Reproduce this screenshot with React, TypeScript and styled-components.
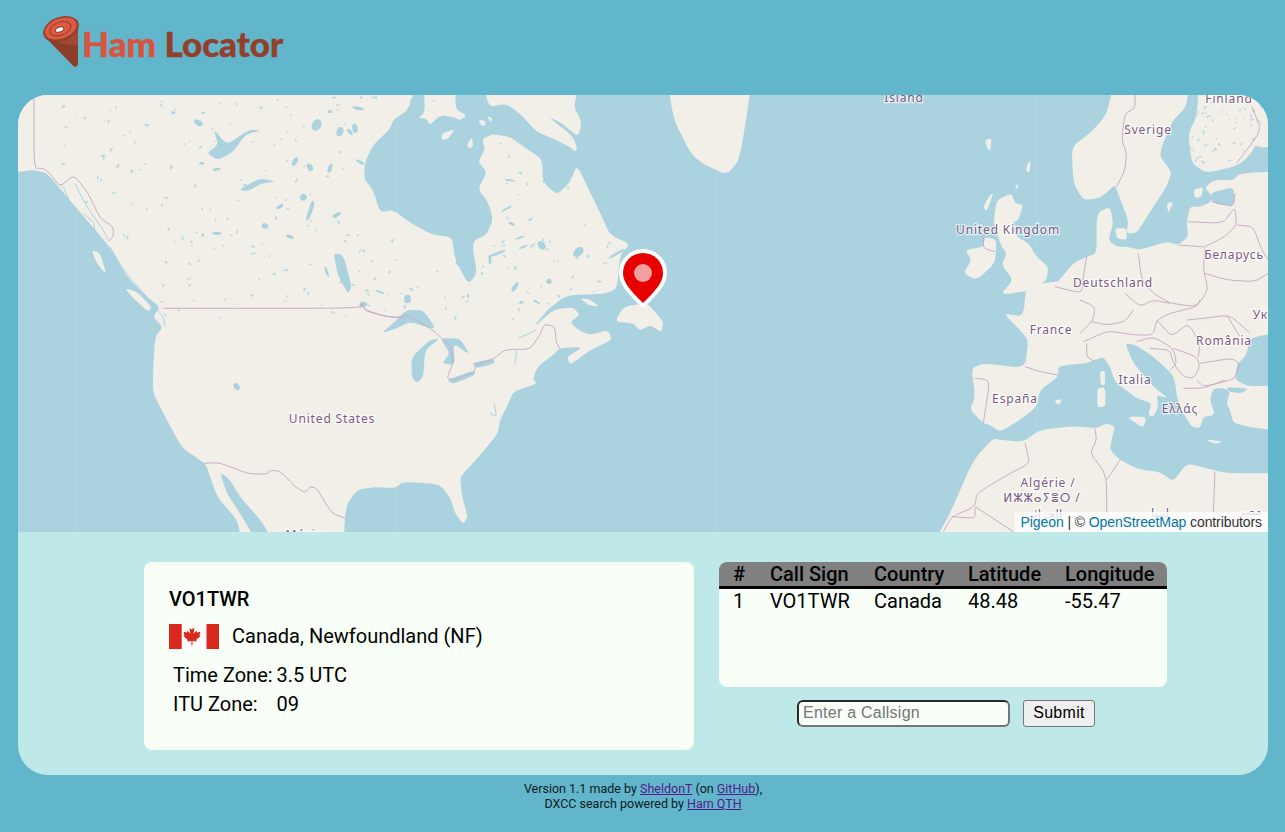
import * as React from 'react'
import styled, { createGlobalStyle } from 'styled-components'

const GlobalStyle = createGlobalStyle`
  html, body {
    margin: 0;
    height: 100%;
    background: #62b6cb;
    font-family: Roboto, "Liberation Sans", sans-serif;
    overflow: hidden;
  }
`

const Page = styled.div`
  display: flex;
  flex-direction: column;
  height: 832px;
  padding: 0 17px 0 18px;
  box-sizing: border-box;
`

const Header = styled.header`
  display: flex;
  align-items: center;
  height: 95px;
  padding: 0 0 11px 22px;
  box-sizing: border-box;
  gap: 2px;
`

const LogoText = styled.div`
  font: 900 35px/40px Lato, "Noto Sans", sans-serif;
  -webkit-text-stroke: 0.4px currentColor;
  color: #923f2c;
  padding-top: 1px;
  span {
    color: #d9543f;
  }
`

const Main = styled.main`
  border-radius: 30px;
  overflow: hidden;
  background: #bee9e8;
  display: flex;
  flex-direction: column;
  height: 680px;
`

const MapFrame = styled.div`
  position: relative;
  height: 437px;
  flex: none;
  background: #aad3df;
  overflow: hidden;
`

const MapSvg = styled.svg`
  display: block;
  width: 100%;
  height: 100%;
`

const MapLabel = styled.text`
  font: 12px "Noto Sans", "DejaVu Sans", sans-serif;
  letter-spacing: 0.85px;
  fill: #7a5a82;
  stroke: rgba(255, 255, 255, 0.7);
  stroke-width: 2.5px;
  paint-order: stroke;
  text-anchor: middle;
`

const Pin = styled.svg`
  position: absolute;
  left: 600px;
  top: 153px;
  width: 50px;
  height: 62px;
`

const Attribution = styled.div`
  position: absolute;
  right: 0;
  bottom: 0;
  height: 20px;
  padding: 0 6px;
  background: rgba(255, 255, 255, 0.8);
  color: #333;
  font: 14px/20px "Liberation Sans", Arial, sans-serif;
  letter-spacing: -0.1px;
  a {
    color: #0078a8;
    text-decoration: none;
  }
`

const Details = styled.section`
  display: flex;
  align-items: flex-start;
  gap: 25px;
  padding: 30px 0 0 126px;
`

const Card = styled.div`
  background: #f7fff7;
  border-radius: 8px;
`

const InfoCard = styled(Card)`
  width: 550px;
  height: 188px;
  padding: 25px 25px 0;
  box-sizing: border-box;
`

const CallSign = styled.div`
  font-size: 20px;
  font-weight: 500;
  line-height: 24px;
  color: #000;
`

const CountryRow = styled.div`
  display: flex;
  align-items: center;
  gap: 13px;
  margin-top: 13px;
  font-size: 20px;
  line-height: 25px;
`

const Flag = styled.svg`
  width: 50px;
  height: 25px;
  flex: none;
`

const ZoneTable = styled.table`
  margin: 11px 0 0 1px;
  border-collapse: separate;
  border-spacing: 2px;
  font-size: 20px;
  td {
    padding: 1px;
    line-height: 25px;
  }
`

const RightColumn = styled.div`
  display: flex;
  flex-direction: column;
  gap: 13px;
  width: 448px;
`

const ResultsCard = styled(Card)`
  height: 125px;
  overflow: hidden;
`

const ResultsTable = styled.table`
  width: 100%;
  table-layout: fixed;
  border-collapse: collapse;
  font-size: 20px;
  th {
    background: #808080;
    border-bottom: 3px solid #000;
    font-weight: 500;
    text-align: left;
    padding: 0 0 0 14px;
    line-height: 24px;
    white-space: nowrap;
  }
  td {
    padding: 0 0 0 14px;
    line-height: 24px;
  }
  th:nth-child(1) { width: 23px; }
  th:nth-child(2) { width: 90px; }
  th:nth-child(3) { width: 80px; }
  th:nth-child(4) { width: 83px; }
`

const SearchForm = styled.form`
  display: flex;
  justify-content: center;
  gap: 13px;
  padding-left: 6px;
`

const CallInput = styled.input`
  width: 213px;
  height: 27px;
  box-sizing: border-box;
  padding: 0 4px 2px;
  border-width: 2px;
  border-style: solid;
  border-color: #2a2a2a #767676 #767676 #2a2a2a;
  border-radius: 6px;
  background: #f7fff7;
  font: 16px "Liberation Sans", Arial, sans-serif;
  letter-spacing: 0.25px;
  &::placeholder {
    color: #757575;
  }
`

const SubmitButton = styled.button`
  width: 72px;
  height: 27px;
  padding: 0 0 2px;
  border: 1px solid #767676;
  border-radius: 3px;
  background: #efefef;
  color: #000;
  font: 16px "Liberation Sans", Arial, sans-serif;
  letter-spacing: 0.3px;
`

const Footer = styled.footer`
  padding-top: 6px;
  text-align: center;
  font-size: 12.5px;
  line-height: 15px;
  color: #0c1a20;
  a {
    color: #551a8b;
  }
`

const LAND = '#f2efe9'
const WATER = '#aad3df'

const V_WEST = 'translate(0 90) scale(.3333)'
const V_NORTH = 'translate(340 92) scale(.3333)'
const V_EAST = 'translate(340 300) scale(.3333)'
const V_NF = 'translate(500 200) scale(.3333)'
const V_EU_N = 'translate(940 90) scale(.3333)'
const V_EU_S = 'translate(940 300) scale(.3333)'

// rounds the corners of a point list, keeping the shape close to the points
function smooth (list: string, closed = true) {
  const pts = list.trim().split(/\s+/).map(p => p.split(',').map(Number))
  const n = pts.length
  const toward = (a: number[], b: number[], t: number) => `${a[0] + (b[0] - a[0]) * t} ${a[1] + (b[1] - a[1]) * t}`
  let d = ''
  if (closed) {
    pts.forEach((p, i) => {
      const prev = pts[(i + n - 1) % n]
      const next = pts[(i + 1) % n]
      d += `${i ? 'L' : 'M'}${toward(p, prev, 0.3)}Q${p[0]} ${p[1]} ${toward(p, next, 0.3)}`
    })
    return d + 'Z'
  }
  d = `M${pts[0][0]} ${pts[0][1]}`
  for (let i = 1; i < n - 1; i++) {
    d += `L${toward(pts[i], pts[i - 1], 0.3)}Q${pts[i][0]} ${pts[i][1]} ${toward(pts[i], pts[i + 1], 0.3)}`
  }
  return d + `L${pts[n - 1][0]} ${pts[n - 1][1]}`
}

const northAmerica =
  '-200,-200 416,-200 416,85 408,110 393,120 390,129 373,145 365,162 364,179 373,190 380,212 393,210 412,224 433,235 452,237 455,259 468,284 477,274 472,242 487,234 493,219 488,202 478,189 487,172 478,162 485,149 482,139 493,134 510,137 527,149 542,159 543,182 557,195 570,182 577,165 590,192 602,217 610,235 630,244 620,255 617,289 603,294 567,295 547,310 533,328 553,310 573,307 580,315 570,322 578,330 590,335 608,330 612,340 590,350 570,365 567,357 583,347 560,348 553,355 537,367 533,380 538,383 513,392 510,400 500,420 498,433 487,447 473,463 460,477 462,497 468,517 463,524 455,513 450,497 440,485 427,483 403,482 395,488 373,487 357,490 345,507 342,600 245,600 240,523 217,497 207,467 203,462 182,448 167,420 153,393 153,373 155,337 163,327 153,317 160,307 147,297 127,277 110,247 67,197 47,173 33,170 18,172 -200,172'

const landShapes: { view: string; points: string[] }[] = [
  {
    view: V_WEST,
    points: [
      '275,480 300,490 320,555 290,520',
      '375,595 410,605 455,650 445,665 400,625'
    ]
  },
  {
    view: V_NORTH,
    points: [
      '250,-60 350,-60 345,50 380,70 360,85 340,75 300,70 270,100 260,80 235,78 255,60',
      '305,125 345,110 325,140 305,145',
      '380,160 395,135 400,160 390,170',
      '415,85 435,85 438,100 425,102',
      '440,72 458,80 452,90',
      '425,-60 445,45 500,35 545,70 590,120 640,140 690,165 705,180 712,165 695,130 625,75 660,90 715,135 725,90 700,40 735,-60',
      '980,-60 1000,80 1050,180 1080,210 1160,250 1200,200 1240,-60'
    ]
  },
  {
    view: V_NF,
    points: [
      '370,320 345,365 400,370 420,392 450,375 485,398 490,365 460,330 440,310',
      '240,295 270,298 297,320 265,315'
    ]
  },
  {
    view: V_EU_N,
    points: [
      '530,-60 750,-60 740,50 700,90 690,110 665,170 660,200 695,245 680,290 640,350 590,430 560,430 565,390 530,300 525,285 480,325 430,330 400,280 395,170 450,130 500,75',
      '780,-60 1100,-60 1100,170 950,170 900,225 800,250 755,220 745,130 770,80',
      '795,295 820,270 880,270 900,250 1100,240 1100,760 260,760 255,635 300,610 350,580 400,520 440,500 470,490 470,370 510,350 520,400 505,450 530,470 560,470 600,480 680,455 715,465 745,440 740,400 750,350 780,350 815,335 810,310',
      '215,310 225,340 250,345 235,390 215,400 230,440 265,460 290,500 325,530 320,570 280,600 180,615 220,570 185,525 200,490 185,470 160,400 170,330',
      '135,440 170,450 165,520 110,570 70,550 95,510 75,480 130,470',
      '135,150 155,145 150,185 140,170',
      '265,215 272,215 268,250 258,240',
      '225,285 235,285 230,300',
      '150,315 160,310 140,365 130,350',
      '525,415 560,415 560,450 530,445',
      '680,340 700,335 685,370',
      '760,300 790,290 785,320 765,325'
    ]
  },
  {
    view: V_EU_S,
    points: [
      '260,-60 1100,-60 1100,400 950,385 880,370 870,330 860,310 870,275 850,265 820,265 810,300 825,345 790,350 780,385 755,380 730,340 710,290 705,240 690,215 640,170 610,150 585,135 555,130 580,190 640,260 685,295 650,285 655,320 640,350 625,345 635,310 590,295 525,245 510,200 490,170 440,190 380,195 355,200 355,230 300,270 290,320 240,360 180,395 150,375 130,370 90,330 105,290 95,205 130,190 255,205 265,120 240,90 190,40 250,50',
      '-60,780 0,695 30,640 100,480 160,415 180,420 250,425 300,390 400,378 470,385 500,370 525,380 515,420 510,450 540,480 600,510 660,515 700,545 740,490 800,505 860,520 1100,520 1100,780',
      '480,215 495,212 495,255 482,255',
      '472,265 495,262 497,320 472,322',
      '560,350 620,350 610,385',
      '345,300 365,298 360,313 348,312',
      '795,418 850,425 825,432'
    ]
  }
]

const waterShapes: { view: string; points: string }[] = [
  { view: V_WEST, points: '660,1145 690,1170 720,1220 790,1300 830,1380 785,1380 720,1270 680,1210' },
  { view: V_WEST, points: '1000,490 1030,495 1055,590 1045,612 1015,560' },
  { view: V_WEST, points: '620,190 655,165 640,115 680,165 745,120 785,120 735,135 700,185 655,210' },
  { view: V_WEST, points: '715,300 780,265 830,275 785,280 745,303' },
  { view: V_WEST, points: '915,395 935,330 945,340 930,385' },
  { view: V_EAST, points: '125,100 170,60 200,30 250,30 290,90 210,65 170,85' },
  { view: V_EAST, points: '215,170 270,120 300,115 255,150 250,230 230,250 215,230' },
  { view: V_EAST, points: '300,115 360,115 390,165 340,130 345,195 305,190 330,160' },
  { view: V_EAST, points: '320,240 405,210 405,225 340,252' },
  { view: V_EAST, points: '395,190 460,175 465,190 410,205' },
  { view: V_EU_S, points: '930,110 1100,90 1100,250 930,260 885,240 890,195 920,165' },
  { view: V_EU_S, points: '860,262 925,265 905,280 865,275' },
  { view: V_EU_N, points: '880,290 885,345 840,345 815,335 810,310' },
  { view: V_EU_N, points: '945,165 985,180 985,240 960,250 930,200' }
]

const borders: { view: string; points: string }[] = [
  { view: V_WEST, points: '102,15 102,235 130,235 150,250 180,290 222,255 265,310 300,385 340,410 340,440 325,455' },
  { view: V_WEST, points: '490,655 1080,655 1085,635 1095,660 1160,680 1210,685' },
  { view: V_WEST, points: '612,1120 660,1118 745,1152 805,1152 805,1142 840,1142 885,1190 915,1208 930,1190 950,1195 995,1270 1035,1285' },
  { view: V_EAST, points: '60,25 65,12 75,32 130,48 170,52 205,45 285,95 300,110 330,135 340,190 320,235 345,240 405,215 405,195 460,178 495,148 570,148 600,105 613,72 645,80 648,125 660,147' },
  { view: V_EU_N, points: '585,15 585,55 555,70 545,150 560,190 555,240 530,290' },
  { view: V_EU_N, points: '935,50 965,120 890,220' },
  { view: V_EU_N, points: '130,440 130,475 165,485' },
  { view: V_EU_N, points: '595,490 605,570 640,610 690,640 770,650 805,600 790,540 795,470 780,470 715,465' },
  { view: V_EU_N, points: '440,500 430,560 425,610 345,590' },
  { view: V_EU_N, points: '815,335 880,350 885,310' },
  { view: V_EU_N, points: '745,395 850,400 885,350 890,405 855,440 795,470' },
  { view: V_EU_N, points: '890,405 940,410 965,480 985,510' },
  { view: V_EU_N, points: '795,550 860,570 945,575 985,550' },
  { view: V_EU_N, points: '555,610 600,650 640,630 690,640' },
  { view: V_EU_S, points: '420,100 460,60 465,20 420,0' },
  { view: V_EU_S, points: '455,65 500,75 555,65 580,30' },
  { view: V_EU_S, points: '430,125 500,95 520,95 585,105 640,105 650,60 690,40 770,20 780,0' },
  { view: V_EU_S, points: '440,130 440,170 465,185' },
  { view: V_EU_S, points: '255,200 300,215 355,225' },
  { view: V_EU_S, points: '105,235 150,240 130,370' },
  { view: V_EU_S, points: '740,60 790,55 870,45 930,100' },
  { view: V_EU_S, points: '650,60 695,110 745,70 780,130 775,170' },
  { view: V_EU_S, points: '590,125 640,110 700,145 710,190 690,210' },
  { view: V_EU_S, points: '630,145 690,150 700,190 730,230 760,235 780,200 770,170 700,145' },
  { view: V_EU_S, points: '780,190 875,175 900,190 885,235 855,245 790,260 770,240' },
  { view: V_EU_S, points: '730,265 790,265 855,240' },
  { view: V_EU_S, points: '860,45 900,110' },
  { view: V_EU_S, points: '255,430 270,490 210,520 110,580 105,620 35,650 10,695' },
  { view: V_EU_S, points: '105,620 220,695' },
  { view: V_EU_S, points: '35,650 105,655 105,625' },
  { view: V_EU_S, points: '465,385 470,420 450,460 490,510 500,550 500,640' },
  { view: V_EU_S, points: '540,480 500,540' },
  { view: V_EU_S, points: '825,515 820,640' }
]

const fjords: { view: string; points: string }[] = [
  { view: V_WEST, points: '190,290 225,370 250,420 290,455' },
  { view: V_WEST, points: '225,280 260,350 310,420 325,450' },
  { view: V_WEST, points: '250,370 285,400 280,445' },
  { view: V_WEST, points: '330,470 370,540 440,620 490,680 495,710' },
  { view: V_EAST, points: '525,190 530,150' },
  { view: V_EAST, points: '462,310 470,350 450,340' },
  { view: V_EAST, points: '535,115 590,90' }
]

// larger lakes: x, y, rx, ry, rotation
const lakes: number[][] = [
  [595, 98, 14, 8, 30], [520, 68, 6, 4, 0], [610, 68, 5, 3, 0], [950, 105, 14, 18, 30], [1020, 125, 10, 14, 20],
  [1065, 115, 8, 14, -10], [990, 65, 8, 4, 0], [1075, 55, 18, 5, 10], [605, 220, 8, 4, 0], [650, 238, 12, 4, -10],
  [885, 215, 7, 14, 30], [930, 232, 8, 12, -30], [990, 235, 6, 14, 20], [910, 322, 10, 10, 0], [840, 350, 12, 5, -30],
  [795, 408, 10, 8, 20], [650, 430, 14, 5, 0], [870, 440, 12, 5, 20], [1010, 375, 14, 6, -30], [980, 545, 16, 4, 70],
  [1222, 627, 10, 13, 0], [1090, 643, 12, 8, 0], [710, 890, 8, 12, -30]
]

const northLakes: number[][] = [
  [60, 210, 14, 4, 30], [30, 120, 12, 5, 50], [510, 265, 16, 3, 10], [515, 395, 10, 4, 20], [540, 437, 14, 3, -20],
  [470, 485, 30, 4, -20], [550, 465, 14, 3, -20], [605, 460, 14, 10, 50], [715, 480, 18, 12, -40], [830, 485, 28, 4, -30],
  [525, 585, 6, 16, 35], [627, 568, 8, 8, 0], [450, 505, 4, 14, 0], [360, 515, 14, 8, 30], [204, 620, 8, 12, 0],
  [395, 390, 16, 14, 0], [500, 350, 18, 3, -30], [640, 225, 5, 8, 20], [120, 600, 14, 3, 20], [590, 630, 12, 3, 30]
]

// fine lake and river specks, from a fixed sequence so the picture is stable
function makeSpecks () {
  let seed = 7
  const next = () => {
    seed = (seed * 16807) % 2147483647
    return seed / 2147483647
  }
  const specks: number[][] = []
  while (specks.length < 230) {
    const x = 60 + next() * 560
    const y = 97 + next() * 225
    const hudson = ((x - 430) / 72) ** 2 + ((y - 175) / 65) ** 2 < 1
    const james = x > 450 && x < 482 && y > 230 && y < 290
    const ocean = x > 612 || (x > 590 && y < 230) || (x > 570 && y < 195) || (x > 480 && y < 140)
    const coast = x < 120 && y > 230
    if (!hudson && !james && !ocean && !coast) {
      specks.push([x, y, 0.7 + next() * 1.8, 0.5 + next() * 0.7, next() * 180])
    }
  }
  while (specks.length < 290) {
    specks.push([1190 + next() * 75, 100 + next() * 65, 0.6 + next() * 1.4, 0.5 + next() * 0.5, next() * 180])
  }
  return specks
}

const specks = makeSpecks()

const tileSeams = [77, 397, 717, 1037]

const labels: { x: number; y: number; text: string }[] = [
  { x: 904, y: 102, text: 'Ísland' },
  { x: 1229, y: 103, text: 'Finland' },
  { x: 1148, y: 134, text: 'Sverige' },
  { x: 1008, y: 234, text: 'United Kingdom' },
  { x: 1113, y: 287, text: 'Deutschland' },
  { x: 1234, y: 259, text: 'Беларусь' },
  { x: 1051, y: 334, text: 'France' },
  { x: 1224, y: 345, text: 'România' },
  { x: 1135, y: 384, text: 'Italia' },
  { x: 1015, y: 403, text: 'España' },
  { x: 1180, y: 413, text: 'Ελλάς' },
  { x: 1048, y: 487, text: 'Algérie /' },
  { x: 1042, y: 502, text: 'ⵍⵣⵣⴰⵢⴻⵔ /' },
  { x: 1045, y: 518, text: 'الجزائر' },
  { x: 332, y: 423, text: 'United States' },
  { x: 308, y: 539, text: 'México' },
  { x: 1278, y: 319, text: 'Україна' },
  { x: 1160, y: 517, text: 'ليبيا' },
  { x: 1250, y: 515, text: 'مصر' }
]

function MapBackdrop () {
  return (
    <MapSvg viewBox="18 95 1250 437" preserveAspectRatio="none">
      <defs>
        <filter id="soft" x="0" y="0" width="100%" height="100%">
          <feGaussianBlur stdDeviation="0.45" />
        </filter>
      </defs>
      <g filter="url(#soft)">
        <rect x="18" y="95" width="1250" height="437" fill={WATER} />
        <path d={smooth(northAmerica)} fill={LAND} />
        {landShapes.map(group => (
          <g key={group.view} transform={group.view} fill={LAND}>
            {group.points.map(points => <path key={points} d={smooth(points)} />)}
          </g>
        ))}
        {waterShapes.map(shape => (
          <path key={shape.points} transform={shape.view} d={smooth(shape.points)} fill={WATER} />
        ))}
        <g transform={V_WEST} fill={WATER}>
          {lakes.map(([x, y, rx, ry, r]) => (
            <ellipse key={`${x}-${y}`} cx={x} cy={y} rx={rx} ry={ry} transform={`rotate(${r} ${x} ${y})`} />
          ))}
        </g>
        <g transform={V_NORTH} fill={WATER}>
          {northLakes.map(([x, y, rx, ry, r]) => (
            <ellipse key={`${x}-${y}`} cx={x} cy={y} rx={rx} ry={ry} transform={`rotate(${r} ${x} ${y})`} />
          ))}
        </g>
        <g fill={WATER} fillOpacity=".8">
          {specks.map(([x, y, rx, ry, r]) => (
            <ellipse key={`${x}-${y}`} cx={x} cy={y} rx={rx} ry={ry} transform={`rotate(${r} ${x} ${y})`} />
          ))}
        </g>
        {fjords.map(line => (
          <path key={line.points} transform={line.view} d={smooth(line.points, false)} fill="none" stroke={WATER} strokeWidth="3" />
        ))}
        {borders.map(line => (
          <path
            key={line.points}
            transform={line.view}
            d={smooth(line.points, false)}
            fill="none"
            stroke="#c9aec4"
            strokeWidth="3"
          />
        ))}
      </g>
      {tileSeams.map(x => (
        <line key={x} x1={x + 0.5} y1="95" x2={x + 0.5} y2="532" stroke="#fff" strokeOpacity=".1" />
      ))}
      {labels.map(label => (
        <MapLabel key={label.text} x={label.x} y={label.y}>{label.text}</MapLabel>
      ))}
    </MapSvg>
  )
}

export default function App () {
  return (
    <Page>
      <GlobalStyle />
      <Header>
        <svg width="40" height="56" viewBox="10 4 40 56">
          <path d="M13 23 L43 55.5 Q46.5 58.5 48 54 L48 11 Z" fill="#a04a33" />
          <path d="M17 29 L43 55.5 Q46.5 58.5 48 54 L48 36 L34 34 Z" fill="#8c3e2b" />
          <g transform="rotate(-21 31 19)">
            <ellipse cx="31" cy="19" rx="18.5" ry="12" fill="#923f2c" />
            <ellipse cx="31" cy="18.5" rx="16.5" ry="10" fill="#dc5a42" />
            <ellipse cx="30.5" cy="18.5" rx="11" ry="6.5" fill="#dc5a42" stroke="#923f2c" strokeWidth="1" />
            <ellipse cx="29.5" cy="19" rx="4.4" ry="2.4" fill="#fff" stroke="#923f2c" strokeWidth="1" />
          </g>
        </svg>
        <LogoText><span>Ham</span> Locator</LogoText>
      </Header>
      <Main>
        <MapFrame>
          <MapBackdrop />
          <Pin viewBox="0 0 50 62">
            <path
              d="M25 5 a20 20 0 0 1 20 20 c0 10 -8 18 -20 30 c-12 -12 -20 -20 -20 -30 a20 20 0 0 1 20 -20z"
              fill="#e60000"
              stroke="#fff"
              strokeWidth="8"
              strokeLinejoin="round"
              paintOrder="stroke"
            />
            <circle cx="25" cy="25" r="9" fill="#f4a0a0" />
          </Pin>
          <Attribution>
            <a href="#pigeon">Pigeon</a> | © <a href="#osm">OpenStreetMap</a> contributors
          </Attribution>
        </MapFrame>
        <Details>
          <InfoCard>
            <CallSign>VO1TWR</CallSign>
            <CountryRow>
              <Flag viewBox="0 0 50 25">
                <rect width="50" height="25" fill="#fff" />
                <rect width="12.7" height="25" fill="#d9291c" />
                <rect x="37.5" width="12.5" height="25" fill="#d9291c" />
                <path
                  transform="translate(25 12) scale(1.2) translate(-25 -12)"
                  d="M25 3 l-2 3.6 -1.9-1 .9 4.6 -2.4-2.5 -.5 1.3 -2.9-.5 .9 3.1 -1.1.4 3.8 3.2 -.5 1.3 3.6-.4 -.1 3.6 h1 l-.1-3.6 3.6.4 -.5-1.3 3.8-3.2 -1.1-.4 .9-3.1 -2.9.5 -.5-1.3 -2.4 2.5 .9-4.6 -1.9 1z"
                  fill="#d9291c"
                />
              </Flag>
              Canada, Newfoundland (NF)
            </CountryRow>
            <ZoneTable>
              <tbody>
                <tr><td>Time Zone:</td><td>3.5 UTC</td></tr>
                <tr><td>ITU Zone:</td><td>09</td></tr>
              </tbody>
            </ZoneTable>
          </InfoCard>
          <RightColumn>
            <ResultsCard>
              <ResultsTable>
                <thead>
                  <tr>
                    <th>#</th><th>Call Sign</th><th>Country</th><th>Latitude</th><th>Longitude</th>
                  </tr>
                </thead>
                <tbody>
                  <tr>
                    <td>1</td><td>VO1TWR</td><td>Canada</td><td>48.48</td><td>-55.47</td>
                  </tr>
                </tbody>
              </ResultsTable>
            </ResultsCard>
            <SearchForm onSubmit={e => e.preventDefault()}>
              <CallInput placeholder="Enter a Callsign" />
              <SubmitButton type="submit">Submit</SubmitButton>
            </SearchForm>
          </RightColumn>
        </Details>
      </Main>
      <Footer>
        Version 1.1 made by <a href="#sheldon">SheldonT</a> (on <a href="#github">GitHub</a>),
        <br />
        DXCC search powered by <a href="#hamqth">Ham QTH</a>
      </Footer>
    </Page>
  )
}
